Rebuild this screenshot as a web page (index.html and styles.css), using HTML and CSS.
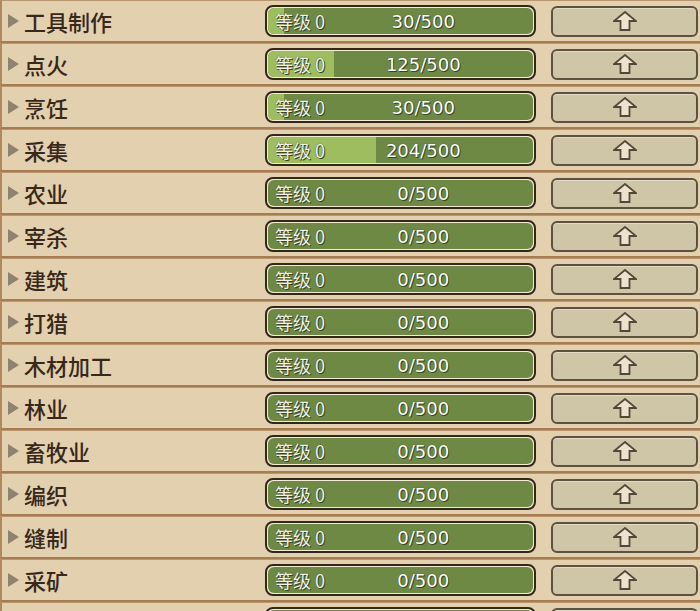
FILE: index.html
```html
<!DOCTYPE html>
<html>
<head>
<meta charset="UTF-8">
<title>技能</title>
<link rel="stylesheet" href="styles.css">
</head>
<body>
  <div id="skills">
    <div class="row">
      <div class="name"><span class="tri"></span>工具制作</div>
      <div class="bar"><div class="track"><div class="fill" style="width: 6%"></div><span class="lvl">等级 0</span><span class="count">30/500</span></div></div>
      <button class="up"><svg viewBox="0 0 24 20" width="24" height="20"><path d="M12 1 L23 10 L16.5 10 L16.5 19 L7.5 19 L7.5 10 L1 10 Z"/></svg></button>
    </div>
    <div class="row">
      <div class="name"><span class="tri"></span>点火</div>
      <div class="bar"><div class="track"><div class="fill" style="width: 25%"></div><span class="lvl">等级 0</span><span class="count">125/500</span></div></div>
      <button class="up"><svg viewBox="0 0 24 20" width="24" height="20"><path d="M12 1 L23 10 L16.5 10 L16.5 19 L7.5 19 L7.5 10 L1 10 Z"/></svg></button>
    </div>
    <div class="row">
      <div class="name"><span class="tri"></span>烹饪</div>
      <div class="bar"><div class="track"><div class="fill" style="width: 6%"></div><span class="lvl">等级 0</span><span class="count">30/500</span></div></div>
      <button class="up"><svg viewBox="0 0 24 20" width="24" height="20"><path d="M12 1 L23 10 L16.5 10 L16.5 19 L7.5 19 L7.5 10 L1 10 Z"/></svg></button>
    </div>
    <div class="row">
      <div class="name"><span class="tri"></span>采集</div>
      <div class="bar"><div class="track"><div class="fill" style="width: 40.8%"></div><span class="lvl">等级 0</span><span class="count">204/500</span></div></div>
      <button class="up"><svg viewBox="0 0 24 20" width="24" height="20"><path d="M12 1 L23 10 L16.5 10 L16.5 19 L7.5 19 L7.5 10 L1 10 Z"/></svg></button>
    </div>
    <div class="row">
      <div class="name"><span class="tri"></span>农业</div>
      <div class="bar"><div class="track"><span class="lvl">等级 0</span><span class="count">0/500</span></div></div>
      <button class="up"><svg viewBox="0 0 24 20" width="24" height="20"><path d="M12 1 L23 10 L16.5 10 L16.5 19 L7.5 19 L7.5 10 L1 10 Z"/></svg></button>
    </div>
    <div class="row">
      <div class="name"><span class="tri"></span>宰杀</div>
      <div class="bar"><div class="track"><span class="lvl">等级 0</span><span class="count">0/500</span></div></div>
      <button class="up"><svg viewBox="0 0 24 20" width="24" height="20"><path d="M12 1 L23 10 L16.5 10 L16.5 19 L7.5 19 L7.5 10 L1 10 Z"/></svg></button>
    </div>
    <div class="row">
      <div class="name"><span class="tri"></span>建筑</div>
      <div class="bar"><div class="track"><span class="lvl">等级 0</span><span class="count">0/500</span></div></div>
      <button class="up"><svg viewBox="0 0 24 20" width="24" height="20"><path d="M12 1 L23 10 L16.5 10 L16.5 19 L7.5 19 L7.5 10 L1 10 Z"/></svg></button>
    </div>
    <div class="row">
      <div class="name"><span class="tri"></span>打猎</div>
      <div class="bar"><div class="track"><span class="lvl">等级 0</span><span class="count">0/500</span></div></div>
      <button class="up"><svg viewBox="0 0 24 20" width="24" height="20"><path d="M12 1 L23 10 L16.5 10 L16.5 19 L7.5 19 L7.5 10 L1 10 Z"/></svg></button>
    </div>
    <div class="row">
      <div class="name"><span class="tri"></span>木材加工</div>
      <div class="bar"><div class="track"><span class="lvl">等级 0</span><span class="count">0/500</span></div></div>
      <button class="up"><svg viewBox="0 0 24 20" width="24" height="20"><path d="M12 1 L23 10 L16.5 10 L16.5 19 L7.5 19 L7.5 10 L1 10 Z"/></svg></button>
    </div>
    <div class="row">
      <div class="name"><span class="tri"></span>林业</div>
      <div class="bar"><div class="track"><span class="lvl">等级 0</span><span class="count">0/500</span></div></div>
      <button class="up"><svg viewBox="0 0 24 20" width="24" height="20"><path d="M12 1 L23 10 L16.5 10 L16.5 19 L7.5 19 L7.5 10 L1 10 Z"/></svg></button>
    </div>
    <div class="row">
      <div class="name"><span class="tri"></span>畜牧业</div>
      <div class="bar"><div class="track"><span class="lvl">等级 0</span><span class="count">0/500</span></div></div>
      <button class="up"><svg viewBox="0 0 24 20" width="24" height="20"><path d="M12 1 L23 10 L16.5 10 L16.5 19 L7.5 19 L7.5 10 L1 10 Z"/></svg></button>
    </div>
    <div class="row">
      <div class="name"><span class="tri"></span>编织</div>
      <div class="bar"><div class="track"><span class="lvl">等级 0</span><span class="count">0/500</span></div></div>
      <button class="up"><svg viewBox="0 0 24 20" width="24" height="20"><path d="M12 1 L23 10 L16.5 10 L16.5 19 L7.5 19 L7.5 10 L1 10 Z"/></svg></button>
    </div>
    <div class="row">
      <div class="name"><span class="tri"></span>缝制</div>
      <div class="bar"><div class="track"><span class="lvl">等级 0</span><span class="count">0/500</span></div></div>
      <button class="up"><svg viewBox="0 0 24 20" width="24" height="20"><path d="M12 1 L23 10 L16.5 10 L16.5 19 L7.5 19 L7.5 10 L1 10 Z"/></svg></button>
    </div>
    <div class="row">
      <div class="name"><span class="tri"></span>采矿</div>
      <div class="bar"><div class="track"><span class="lvl">等级 0</span><span class="count">0/500</span></div></div>
      <button class="up"><svg viewBox="0 0 24 20" width="24" height="20"><path d="M12 1 L23 10 L16.5 10 L16.5 19 L7.5 19 L7.5 10 L1 10 Z"/></svg></button>
    </div>
    <!-- следующая строка видна только краем -->
    <div class="row">
      <div class="name"></div>
      <div class="bar"><div class="track"></div></div>
      <button class="up"></button>
    </div>
  </div>
</body>
</html>
```

FILE: styles.css
```css
/* сброс */
* {
  margin: 0;
  padding: 0;
  box-sizing: border-box;
}

html, body {
  height: 100%;
  overflow: hidden;
  background: #ecdbbd;
}

#skills {
  width: 700px;
}

.row {
  height: 43px;
  display: flex;
  align-items: center;
  background: #e3d0ae;
  border-top: 1px solid #b99670;
  border-bottom: 2px solid #a77c50;
  border-left: 2px solid #b08860;
  box-shadow: 0 1px 0 #ecdbbd;
}

.name {
  width: 263px;
  display: flex;
  align-items: center;
  font-family: "Noto Sans CJK SC", "Noto Sans", sans-serif;
  font-size: 22px;
  font-weight: 500;
  color: #37281a;
  padding-left: 6px;
}

.tri {
  width: 0;
  height: 0;
  border-left: 11px solid #8d8370;
  border-top: 7px solid transparent;
  border-bottom: 7px solid transparent;
  margin-right: 5px;
}

.bar {
  width: 271px;
  height: 32px;
  border: 2px solid #33261a;
  border-radius: 8px;
  background: #f3ebd6;
  padding: 1px;
}

.track {
  position: relative;
  height: 100%;
  border-radius: 6px;
  background: #6d8944;
  overflow: hidden;
  display: flex;
  align-items: center;
  padding-left: 7px;
  color: #fff;
  font-family: "DejaVu Sans", "Noto Sans CJK SC", sans-serif;
  font-size: 18px;
  text-shadow: 0 0 1px #2c3818, 1px 1px 0 #3b4a22;
}

.fill {
  position: absolute;
  left: 0;
  top: 0;
  bottom: 0;
  background: #9dbd5f;
}

.lvl {
  position: relative;
  font-family: "Noto Sans CJK SC", "DejaVu Sans", sans-serif;
  font-size: 18px;
  color: #f4f2e8;
}

.count {
  position: absolute;
  left: 58.6%;
  transform: translateX(-50%);
}

.up {
  margin-left: 15px;
  width: 147px;
  height: 31px;
  background: #cec6a6;
  border: 2px solid #5e5141;
  border-radius: 6px;
  box-shadow: inset 0 1px 0 #e2dcc4;
  display: flex;
  align-items: center;
  justify-content: center;
}

.up svg path {
  fill: #ebe3cc;
  stroke: #54463a;
  stroke-width: 1.8;
  stroke-linejoin: miter;
}
```
